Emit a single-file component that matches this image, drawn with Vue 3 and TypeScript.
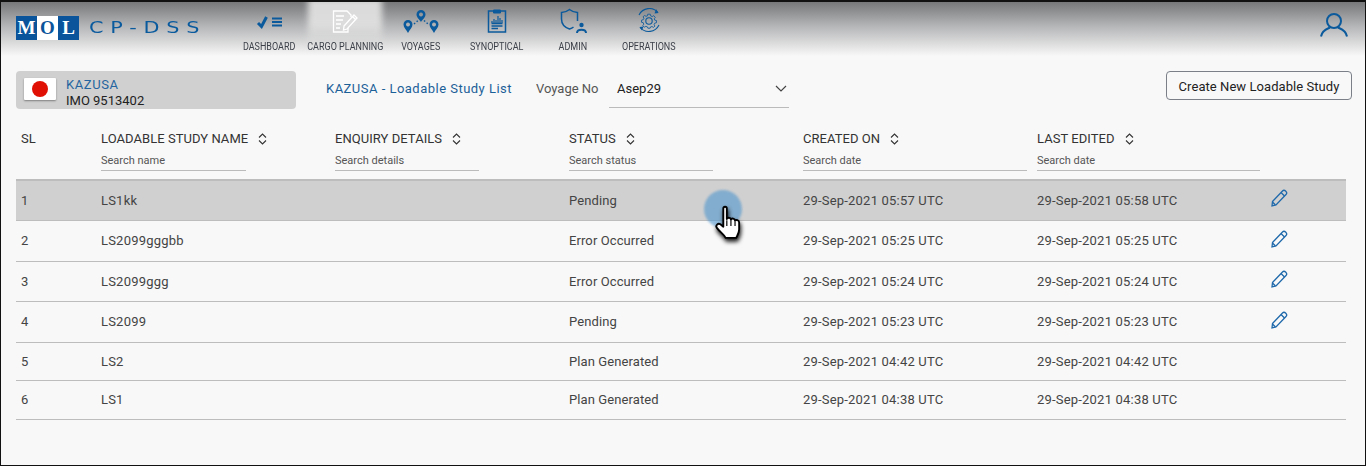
<script setup lang="ts">
interface StudyRow {
  sl: number;
  name: string;
  status: string;
  created: string;
  edited: string;
  editable: boolean;
}

const navItems = [
  { key: 'dashboard', label: 'DASHBOARD' },
  { key: 'cargo', label: 'CARGO PLANNING' },
  { key: 'voyages', label: 'VOYAGES' },
  { key: 'synoptical', label: 'SYNOPTICAL' },
  { key: 'admin', label: 'ADMIN' },
  { key: 'operations', label: 'OPERATIONS' }
];

const columns = [
  { label: 'LOADABLE STUDY NAME', placeholder: 'Search name', width: 145 },
  { label: 'ENQUIRY DETAILS', placeholder: 'Search details', width: 144 },
  { label: 'STATUS', placeholder: 'Search status', width: 144 },
  { label: 'CREATED ON', placeholder: 'Search date', width: 224 },
  { label: 'LAST EDITED', placeholder: 'Search date', width: 223 }
];

const rows: StudyRow[] = [
  { sl: 1, name: 'LS1kk', status: 'Pending', created: '29-Sep-2021 05:57 UTC', edited: '29-Sep-2021 05:58 UTC', editable: true },
  { sl: 2, name: 'LS2099gggbb', status: 'Error Occurred', created: '29-Sep-2021 05:25 UTC', edited: '29-Sep-2021 05:25 UTC', editable: true },
  { sl: 3, name: 'LS2099ggg', status: 'Error Occurred', created: '29-Sep-2021 05:24 UTC', edited: '29-Sep-2021 05:24 UTC', editable: true },
  { sl: 4, name: 'LS2099', status: 'Pending', created: '29-Sep-2021 05:23 UTC', edited: '29-Sep-2021 05:23 UTC', editable: true },
  { sl: 5, name: 'LS2', status: 'Plan Generated', created: '29-Sep-2021 04:42 UTC', edited: '29-Sep-2021 04:42 UTC', editable: false },
  { sl: 6, name: 'LS1', status: 'Plan Generated', created: '29-Sep-2021 04:38 UTC', edited: '29-Sep-2021 04:38 UTC', editable: false }
];
</script>

<template>
  <div class="app">
    <header class="top-bar">
      <div class="brand">
        <div class="mol-logo"><span>M</span><span class="mol-o">O</span><span>L</span></div>
        <div class="product">CP-DSS</div>
      </div>
      <nav class="nav">
        <div v-for="item in navItems" :key="item.key" class="nav-item" :class="{ active: item.key === 'cargo' }">
          <svg v-if="item.key === 'dashboard'" class="nav-icon" viewBox="0 0 28 26" fill="none" stroke="#0b5a9c">
            <path d="M3 15 L6.500 18.500 L11.500 9" stroke-width="3" />
            <path d="M17 10.500 H27 M17 14 H27 M17 17.500 H27" stroke-width="2" />
          </svg>
          <svg v-else-if="item.key === 'cargo'" class="nav-icon" viewBox="0 0 28 26" fill="none" stroke="#fff" stroke-width="1.300">
            <path d="M17 20 V24 H2.500 V3 H16 L20 7 V9" />
            <path d="M5 8 H13 M5 12 H12 M5 16 H10 M5 20 H9" />
            <path d="M13 18 L23 7 L26 10 L16 21 L12.500 22 Z M21.500 8.500 L24.500 11.500" />
          </svg>
          <svg v-else-if="item.key === 'voyages'" class="nav-icon" viewBox="0 0 40 26" fill="#0b5a9c">
            <path fill-rule="evenodd" d="M20 2 a4.500 4.500 0 0 1 4.500 4.500 c0 3 -3 5 -4.500 7.500 c-1.500 -2.500 -4.500 -4.500 -4.500 -7.500 A4.500 4.500 0 0 1 20 2 Z M20 4.500 a2 2 0 1 0 0.010 0 Z" />
            <path fill-rule="evenodd" d="M7 12 a4.500 4.500 0 0 1 4.500 4.500 c0 3 -3 5.500 -4.500 8.500 c-1.500 -3 -4.500 -5.500 -4.500 -8.500 A4.500 4.500 0 0 1 7 12 Z M7 14.500 a2 2 0 1 0 0.010 0 Z" />
            <path fill-rule="evenodd" d="M33 12 a4.500 4.500 0 0 1 4.500 4.500 c0 3 -3 5.500 -4.500 8.500 c-1.500 -3 -4.500 -5.500 -4.500 -8.500 A4.500 4.500 0 0 1 33 12 Z M33 14.500 a2 2 0 1 0 0.010 0 Z" />
            <path d="M13 16 L17 12.500 M23 12.500 L27 16" stroke="#0b5a9c" stroke-width="1.500" stroke-dasharray="1.500 2" fill="none" />
          </svg>
          <svg v-else-if="item.key === 'synoptical'" class="nav-icon" viewBox="0 0 28 26" fill="none" stroke="#0b5a9c">
            <path d="M5.500 3 H22.500 V24 H5.500 Z" stroke-width="1.500" />
            <path d="M10.500 2 H17.500 V5 H10.500 Z" fill="#0b5a9c" stroke-width="1" />
            <path d="M9 15 V13 M11 15 V11 M13 15 V12 M15 15 V8 M17 15 V10 M19 15 V12" stroke-width="1.200" />
            <path d="M8.500 15.500 H19.500 M8.500 18 H19.500 M8.500 20.500 H15" stroke-width="1.300" />
          </svg>
          <svg v-else-if="item.key === 'admin'" class="nav-icon" viewBox="0 0 28 26" fill="none" stroke="#0b5a9c">
            <path d="M14.500 19 C13.500 19.800 12 20.500 10.500 21 C6 19.500 2.500 16.500 2.500 11 V4.500 C5.500 4.500 8 3.500 10.500 1.500 C13 3.500 15.500 4.500 18.500 4.500 V13" stroke-width="1.500" />
            <circle cx="22.500" cy="17" r="2.200" fill="#0b5a9c" stroke="none" />
            <path d="M18 25 C18 20.500 27 20.500 27 25" stroke-width="2" />
          </svg>
          <svg v-else class="nav-icon" viewBox="0 1 28 26" fill="none" stroke="#0b5a9c">
            <path d="M4 8 A11.500 11.500 0 0 1 23 5.500 M24 18 A11.500 11.500 0 0 1 5 20.500" stroke-width="1.100" />
            <path d="M21 2 L23.500 6 L19.500 6.500 Z M7 23.500 L4.500 20 L8.500 19.500 Z" fill="#0b5a9c" stroke="none" />
            <path d="M12.500 6 H15.500 L16 8 L17.800 8.800 L19.600 7.700 L21.400 9.700 L20.200 11.400 L20.800 13 L22.800 13.500 V16 L20.800 16.500 L20 18.200 L21 20 L19.200 21.500 L17.500 20.500 L15.800 21 L15.300 22.500 H12.700 L12.200 21 L10.300 20.300 L8.500 21.300 L6.700 19.500 L7.800 17.800 L7.200 16 L5.200 15.500 V13 L7.200 12.500 L8 10.800 L7 9 L8.800 7.500 L10.500 8.500 L12.200 7.800 Z" stroke-width="1" transform="translate(14 14) scale(.85) translate(-14 -14)" />
            <circle cx="14" cy="14" r="3.200" stroke-width="1.100" />
          </svg>
          <span class="nav-label">{{ item.label }}</span>
        </div>
      </nav>
      <svg class="user-icon" viewBox="0 0 28 24" fill="none" stroke="#0b5a9c" stroke-width="2">
        <circle cx="14" cy="8" r="7" />
        <path d="M1 23.500 C2 17 8 15.500 10 14.500 M27 23.500 C26 17 20 15.500 18 14.500" />
      </svg>
    </header>

    <section class="toolbar">
      <div class="vessel-card">
        <div class="flag"><span class="flag-sun"></span></div>
        <div class="vessel-text">
          <div class="vessel-name">KAZUSA</div>
          <div class="vessel-imo">IMO 9513402</div>
        </div>
      </div>
      <div class="page-title">KAZUSA - Loadable Study List</div>
      <label class="voyage-label">Voyage No</label>
      <div class="voyage-select">
        <span>Asep29</span>
        <svg class="chevron" viewBox="0 0 12 7" fill="none" stroke="#444" stroke-width="1.200"><path d="M1 1 L6 6 L11 1" /></svg>
      </div>
      <button class="create-btn">Create New Loadable Study</button>
    </section>

    <section class="table">
      <div class="table-head">
        <div class="head-cell sl-col"><div class="head-label">SL</div></div>
        <div v-for="col in columns" :key="col.label" class="head-cell">
          <div class="head-label">
            {{ col.label }}
            <svg class="sort" viewBox="0 0 9 12" fill="none" stroke="#333" stroke-width="1.100">
              <path d="M1 4.500 L4.500 1 L8 4.500 M1 7.500 L4.500 11 L8 7.500" />
            </svg>
          </div>
          <div class="head-search" :style="{ width: col.width + 'px' }">{{ col.placeholder }}</div>
        </div>
        <div class="head-cell"></div>
      </div>

      <div v-for="row in rows" :key="row.sl" class="table-row" :class="{ selected: row.sl === 1, plain: !row.editable }">
        <div class="sl-col">{{ row.sl }}</div>
        <div>{{ row.name }}</div>
        <div></div>
        <div class="status-cell">{{ row.status }}</div>
        <div>{{ row.created }}</div>
        <div>{{ row.edited }}</div>
        <div>
          <svg v-if="row.editable" class="edit" viewBox="0 0 17 18" fill="none" stroke="#1f69ab" stroke-width="1.300">
            <path d="M1.500 12.500 L11.500 2 C12.500 1 13.500 1 14.800 2.200 C16 3.400 16 4.500 15 5.500 L5 16 L1 17 Z" />
            <path d="M10 3.500 L13.500 7 M1.500 13 L4.500 16" />
          </svg>
        </div>
      </div>
    </section>

    <div class="pointer">
      <span class="pointer-ring"></span>
      <svg class="pointer-hand" viewBox="1 0 22 29">
        <path d="M8 3 C8 1 11 1 11 3 V12 C11.500 10.500 14.500 10.500 14.500 12.500 C15 11 18 11.300 18 13.500 C18.700 12.300 21.500 12.800 21.500 15 V21 C21.500 24 20 26 19 28 H10 C8.500 25 5 23 2.500 19.500 C1 17.500 3.500 15 5.500 16.500 L8 18.500 Z" fill="#fff" stroke="#000" stroke-width="1.600" stroke-linejoin="round" />
        <path d="M11 13 V18 M14.500 13 V18 M18 14 V18" stroke="#000" stroke-width="1" />
      </svg>
    </div>
  </div>
</template>

<style>
html,
body {
  margin: 0;
  background: #f8f8f8;
}
</style>

<style scoped>
.app {
  position: relative;
  box-sizing: border-box;
  width: 1366px;
  height: 466px;
  overflow: hidden;
  background: #f8f8f8;
  border: 1px solid #111;
  border-top-width: 2px;
  font-family: Roboto, "Liberation Sans", sans-serif;
  font-size: 13px;
  letter-spacing: 0.2px;
  color: #444;
}

/* top bar */
.top-bar {
  display: flex;
  height: 54px;
  margin-bottom: 15px;
  padding: 0 16px 0 15px;
  background: linear-gradient(180deg, #77787a 0%, #b5b6b8 45%, #e6e6e6 85%, #f8f8f8 100%);
}

.brand {
  display: flex;
  align-items: flex-start;
  width: 215px;
  padding-top: 14px;
}

.mol-logo {
  display: flex;
  width: 63px;
  height: 24px;
  background: #0a549b;
  color: #fff;
  font-family: "Liberation Serif", serif;
  font-weight: 700;
  font-size: 19px;
  line-height: 24px;
  letter-spacing: 0;
  text-align: center;
}

.mol-logo span {
  flex: 1;
}

.mol-o {
  background: #fff;
  color: #0a549b;
}

.product {
  margin: 3px 0 0 10px;
  font-family: "DejaVu Sans", sans-serif;
  font-size: 16px;
  line-height: 18px;
  letter-spacing: 5.200px;
  color: #0a5a9e;
  white-space: nowrap;
  transform: scaleX(1.3);
  transform-origin: left center;
}

.nav {
  display: flex;
}

.nav-item {
  position: relative;
  display: flex;
  flex-direction: column;
  align-items: center;
  width: 76px;
}

.nav-item > * {
  position: relative;
}

/* soft glow behind the open tab */
.nav-item.active::before {
  content: '';
  position: absolute;
  inset: -4px 1px 4px 1px;
  background: linear-gradient(180deg, #d8d8d8 0%, #dedede 50%, rgba(240, 240, 240, 0) 100%);
  filter: blur(3px);
}

.nav-icon {
  flex: none;
  width: 40px;
  height: 26px;
  margin-top: 6px;
}

.nav-label {
  margin-top: 6px;
  font-size: 10px;
  line-height: 14px;
  letter-spacing: 0;
  color: #3c4048;
  white-space: nowrap;
  transform: scaleX(0.9);
}

.user-icon {
  width: 28px;
  height: 24px;
  margin: 11px 1px 0 auto;
}

/* vessel + voyage toolbar */
.toolbar {
  display: flex;
  align-items: flex-start;
  padding: 0 13px 0 15px;
  height: 38px;
}

.vessel-card {
  display: flex;
  box-sizing: border-box;
  width: 280px;
  height: 38px;
  padding: 7px 8px;
  gap: 10px;
  background: #d0d0d0;
  border-radius: 4px;
}

.flag {
  display: flex;
  align-items: center;
  justify-content: center;
  width: 32px;
  height: 22px;
  background: #fff;
  border-radius: 1px;
  box-shadow: 0 1px 2px rgba(0, 0, 0, 0.4);
}

.flag-sun {
  width: 16px;
  height: 16px;
  border-radius: 50%;
  background: #e01005;
}

.vessel-text {
  line-height: 16px;
  margin-top: -1.500px;
}

.vessel-name {
  color: #25659f;
  letter-spacing: 0.6px;
}

.vessel-imo {
  color: #222;
  letter-spacing: 0;
}

.page-title {
  margin: 10px 0 0 30px;
  width: 210px;
  line-height: 16px;
  letter-spacing: 0.48px;
  color: #1c6098;
}

.voyage-label {
  margin-top: 10px;
  width: 73px;
  line-height: 16px;
  letter-spacing: 0;
  color: #555;
}

.voyage-select {
  display: flex;
  align-items: center;
  justify-content: space-between;
  box-sizing: border-box;
  width: 180px;
  height: 37px;
  padding: 0 2px 1px 8px;
  border-bottom: 1px solid #bbb;
  letter-spacing: 0;
  color: #222;
}

.chevron {
  width: 12px;
  height: 7px;
}

.create-btn {
  margin-left: auto;
  width: 186px;
  height: 29px;
  padding: 1px 0 0;
  background: transparent;
  border: 1px solid #7a7f88;
  border-radius: 4px;
  font: inherit;
  letter-spacing: 0.06px;
  color: #222;
}

/* table */
.table {
  margin: 21px 19px 0 15px;
}

.table-head,
.table-row {
  display: grid;
  grid-template-columns: 85px 234px 234px 234px 234px 234px 1fr;
}

.table-head {
  box-sizing: border-box;
  height: 50.500px;
  border-bottom: 2px solid #bdbdbd;
}

.head-cell {
  min-width: 0;
}

.sl-col {
  padding-left: 5px;
}

.head-label {
  display: flex;
  align-items: center;
  gap: 10px;
  height: 16px;
  letter-spacing: 0.05px;
  color: #333;
  white-space: nowrap;
}

.sort {
  width: 9px;
  height: 12px;
  margin-top: 2px;
}

.head-search {
  box-sizing: border-box;
  margin-top: 7px;
  height: 18px;
  border-bottom: 1px solid #bbb;
  font-size: 11px;
  line-height: 15px;
  letter-spacing: 0;
  color: #555;
}

.table-row {
  align-items: center;
  box-sizing: border-box;
  height: 40.500px;
  border-bottom: 1px solid #bdbdbd;
}

.table-row.plain {
  height: 38.500px;
}

.table-row.selected {
  background: #d0d0d0;
}

.status-cell {
  letter-spacing: 0.1px;
}

.edit {
  display: block;
  width: 17px;
  height: 18px;
  margin-top: -4px;
}

/* recorded mouse pointer */
.pointer {
  position: absolute;
  left: 703px;
  top: 188px;
  width: 40px;
  height: 52px;
}

.pointer-ring {
  position: absolute;
  left: 0;
  top: 0;
  width: 38px;
  height: 38px;
  border-radius: 50%;
  background: rgba(80, 150, 205, 0.6);
  filter: blur(1px);
}

.pointer-hand {
  position: absolute;
  left: 11px;
  top: 15px;
  width: 26px;
  height: 34px;
  filter: drop-shadow(1px 3px 2px rgba(0, 0, 0, 0.9));
}
</style>
